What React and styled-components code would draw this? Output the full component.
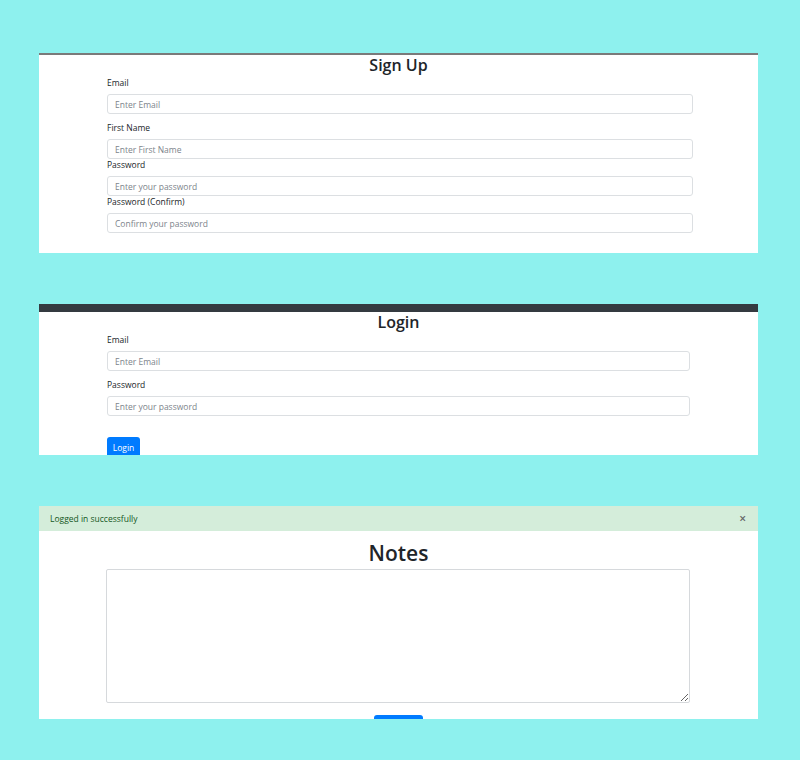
import React from 'react';
import styled, { createGlobalStyle } from 'styled-components';

const GlobalStyle = createGlobalStyle`
  html, body {
    margin: 0;
    padding: 0;
    background: #8ef1ee;
  }
  body {
    font-family: "Open Sans", "Noto Sans", sans-serif;
    color: #212529;
  }
`;

const Page = styled.div`
  width: 800px;
  height: 760px;
  padding-top: 53px;
  box-sizing: border-box;
  display: flex;
  flex-direction: column;
  gap: 51px;
`;

const Panel = styled.section`
  margin-left: 39px;
  width: 719px;
  height: ${p => p.$height}px;
  background: #fff;
  border-top: ${p => p.$border};
  box-sizing: border-box;
  overflow: hidden;
`;

const Title = styled.h2`
  margin: ${p => p.$top || 0}px 0 0;
  text-align: center;
  font-size: ${p => p.$size || 16}px;
  line-height: ${p => p.$line || 20}px;
  font-weight: 600;
  color: #212529;
`;

const Form = styled.div`
  margin-left: 68px;
  width: ${p => p.$width}px;
  display: flex;
  flex-direction: column;
`;

const Group = styled.div`
  display: flex;
  flex-direction: column;
  gap: 5px;
  margin-top: ${p => p.$top || 0}px;
`;

const Label = styled.label`
  font-size: 8.5px;
  line-height: 12px;
  color: #212529;
`;

const Input = styled.input`
  height: 20px;
  box-sizing: border-box;
  border: 1px solid #dcdfe2;
  border-radius: 3px;
  padding: 0 7px;
  font-family: inherit;
  font-size: 8.5px;
  color: #495057;
  outline: none;
  &::placeholder {
    color: #7d848b;
  }
`;

const Button = styled.button`
  align-self: ${p => p.$align || 'flex-start'};
  width: ${p => p.$width}px;
  height: 20px;
  margin-top: ${p => p.$top || 0}px;
  background: #007bff;
  border: none;
  border-radius: 3px;
  color: #fff;
  font-family: inherit;
  font-size: 8.5px;
  padding: 0;
`;

const Alert = styled.div`
  height: 25px;
  background: #d4edda;
  color: #155724;
  display: flex;
  align-items: center;
  justify-content: space-between;
  padding: 0 12px 0 11px;
  font-size: 8.5px;
`;

const Close = styled.span`
  font-size: 12px;
  font-weight: 600;
  color: #666;
  line-height: 1;
`;

const NotesArea = styled.textarea`
  display: block;
  margin: 2px 0 12px 67px;
  width: 584px;
  height: 134px;
  box-sizing: border-box;
  border: 1px solid #d6d9dc;
  border-radius: 2px;
  resize: vertical;
  font-family: inherit;
`;

const Centered = styled.div`
  display: flex;
  justify-content: center;
`;

function Field({ label, placeholder, type = 'text', top }) {
  return (
    <Group $top={top}>
      <Label>{label}</Label>
      <Input type={type} placeholder={placeholder} />
    </Group>
  );
}

export default function App() {
  return (
    <>
      <GlobalStyle />
      <Page>
        <Panel $height={200} $border="2px solid #7a7a7a">
          <Title>Sign Up</Title>
          <Form $width={586}>
            <Field top={2} label="Email" placeholder="Enter Email" />
            <Field top={8} label="First Name" placeholder="Enter First Name" />
            <Field label="Password" placeholder="Enter your password" type="password" />
            <Field label="Password (Confirm)" placeholder="Confirm your password" type="password" />
          </Form>
        </Panel>

        <Panel $height={151} $border="8px solid #343a40">
          <Title>Login</Title>
          <Form $width={583}>
            <Field top={2} label="Email" placeholder="Enter Email" />
            <Field top={8} label="Password" placeholder="Enter your password" type="password" />
            <Button $width={33} $top={21}>Login</Button>
          </Form>
        </Panel>

        <Panel $height={213}>
          <Alert>
            <span>Logged in successfully</span>
            <Close>×</Close>
          </Alert>
          <Title $size={21} $line={28} $top={8}>Notes</Title>
          <NotesArea />
          <Centered>
            <Button $width={49} />
          </Centered>
        </Panel>
      </Page>
    </>
  );
}
